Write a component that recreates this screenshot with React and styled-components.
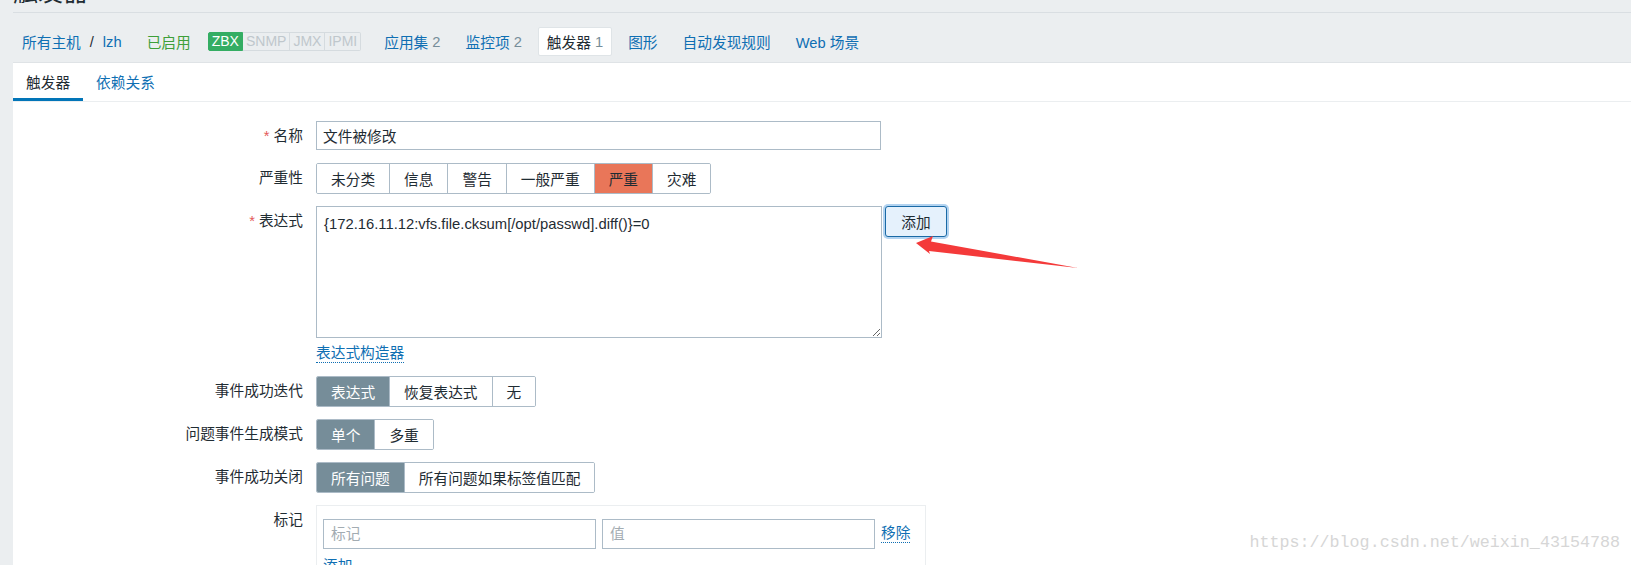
import React from 'react'
import styled, { createGlobalStyle } from 'styled-components'

const GlobalStyle = createGlobalStyle`
  body {
    margin: 0;
    background-color: #ebeef0;
    font-family: 'Liberation Sans', 'Noto Sans CJK SC', sans-serif;
    font-size: 14.7px;
    color: #1f2c33;
  }
`

const severities = ['未分类', '信息', '警告', '一般严重', '严重', '灾难']

const App = () => {
  return (
    <>
      <GlobalStyle />
      <Page>
        <TitleBar>
          <Title>触发器</Title>
        </TitleBar>

        <Nav>
          <NavItem>
            <span>所有主机</span>
            <Sep>/</Sep>
            <span>lzh</span>
          </NavItem>
          <NavItem><Status>已启用</Status></NavItem>
          <Badges>
            <Badge $on>ZBX</Badge>
            <Badge>SNMP</Badge>
            <Badge>JMX</Badge>
            <Badge>IPMI</Badge>
          </Badges>
          <NavItem>应用集 <Count>2</Count></NavItem>
          <NavItem>监控项 <Count>2</Count></NavItem>
          <NavItem $active>触发器 <Count>1</Count></NavItem>
          <NavItem>图形</NavItem>
          <NavItem>自动发现规则</NavItem>
          <NavItem>Web 场景</NavItem>
        </Nav>

        <Panel>
          <Tabs>
            <Tab $active>触发器</Tab>
            <Tab>依赖关系</Tab>
          </Tabs>

          <Form>
            <Label><Req>*</Req> 名称</Label>
            <TextInput defaultValue="文件被修改" />

            <Label>严重性</Label>
            <Segmented>
              {severities.map((s) => (
                <Segment key={s} $sel={s === '严重' ? 'high' : null}>{s}</Segment>
              ))}
            </Segmented>

            <Label><Req>*</Req> 表达式</Label>
            <div>
              <ExprRow>
                <ExprArea defaultValue="{172.16.11.12:vfs.file.cksum[/opt/passwd].diff()}=0" />
                <AddButton>添加</AddButton>
              </ExprRow>
              <BuilderLink>
                <DottedLink>表达式构造器</DottedLink>
              </BuilderLink>
            </div>

            <Label>事件成功迭代</Label>
            <Segmented>
              <Segment $sel="on">表达式</Segment>
              <Segment>恢复表达式</Segment>
              <Segment>无</Segment>
            </Segmented>

            <Label>问题事件生成模式</Label>
            <Segmented>
              <Segment $sel="on">单个</Segment>
              <Segment>多重</Segment>
            </Segmented>

            <Label>事件成功关闭</Label>
            <Segmented>
              <Segment $sel="on">所有问题</Segment>
              <Segment>所有问题如果标签值匹配</Segment>
            </Segmented>

            <Label>标记</Label>
            <TagBox>
              <TagRow>
                <TagInput placeholder="标记" />
                <TagInput placeholder="值" />
                <DottedLink>移除</DottedLink>
              </TagRow>
              <TagAdd><DottedLink>添加</DottedLink></TagAdd>
            </TagBox>
          </Form>
        </Panel>

        {/* red annotation arrow drawn over the screenshot */}
        <Arrow viewBox="0 0 180 45" width="180" height="45">
          <polygon points="11,15 28,8 26,13.5 173,40 24,23 25,26" fill="#f43a3a" />
        </Arrow>

        <Watermark>https://blog.csdn.net/weixin_43154788</Watermark>
      </Page>
    </>
  )
}

const Page = styled.div`
  position: relative;
  height: 565px;
  overflow: hidden;
  padding-left: 13px;
`

const TitleBar = styled.div`
  height: 12px;
  overflow: hidden;
  border-bottom: 1px solid #d9dee2;
`

const Title = styled.h1`
  margin: -23px 0 0 0;
  font-size: 25px;
  line-height: 30px;
  font-weight: normal;
  color: #1f2c33;
`

const Nav = styled.div`
  display: flex;
  align-items: center;
  gap: 7px;
  height: 49px;
  box-sizing: border-box;
  padding-top: 8px;
`

const NavItem = styled.div`
  display: flex;
  align-items: center;
  height: 29px;
  box-sizing: border-box;
  padding: 0 8px;
  white-space: pre;
  color: ${(p) => (p.$active ? '#1f2c33' : '#0f6fb3')};
  background-color: ${(p) => (p.$active ? '#ffffff' : 'transparent')};
  border: 1px solid ${(p) => (p.$active ? '#dfe4e7' : 'transparent')};
  border-radius: 2px;
`

const Sep = styled.span`
  margin: 0 9px 0 9px;
  color: #1f2c33;
`

const Count = styled.span`
  color: #768d99;
`

const Status = styled.span`
  color: #3e9f3a;
`

const Badges = styled.div`
  display: flex;
  height: 19px;
  margin: 0 7px 0 1px;
`

const Badge = styled.span`
  display: flex;
  align-items: center;
  padding: 0 3px;
  font-size: 14px;
  line-height: 17px;
  color: ${(p) => (p.$on ? '#ffffff' : '#bfc7cc')};
  background-color: ${(p) => (p.$on ? '#34ad63' : 'transparent')};
  border: 1px solid ${(p) => (p.$on ? '#34ad63' : '#d5dbdf')};
  border-left-width: ${(p) => (p.$on ? '1px' : '0')};
  border-radius: ${(p) => (p.$on ? '2px 0 0 2px' : '0')};
  &:last-child {
    border-radius: 0 2px 2px 0;
  }
`

const Panel = styled.div`
  background-color: #ffffff;
  border-top: 1px solid #dfe3e6;
  min-height: 600px;
`

const Tabs = styled.div`
  display: flex;
  height: 39px;
  box-sizing: border-box;
  border-bottom: 1px solid #ebeef0;
`

const Tab = styled.div`
  display: flex;
  align-items: center;
  padding: 2px 13px 0;
  box-sizing: border-box;
  color: ${(p) => (p.$active ? '#1f2c33' : '#0f6fb3')};
  border-bottom: 3px solid ${(p) => (p.$active ? '#0275b8' : 'transparent')};
`

const Form = styled.div`
  display: grid;
  grid-template-columns: 290px auto;
  column-gap: 13px;
  row-gap: 12px;
  justify-items: start;
  padding-top: 19px;
`

const Label = styled.div`
  justify-self: end;
  line-height: 30px;
  white-space: nowrap;
  color: #1f2c33;
`

const Req = styled.span`
  color: #e45959;
`

const TextInput = styled.input`
  width: 565px;
  height: 29px;
  box-sizing: border-box;
  padding: 0 6px;
  border: 1px solid #acbbc7;
  font-family: inherit;
  font-size: 14.7px;
  color: #1f2c33;
  outline: none;
`

const Segmented = styled.div`
  display: flex;
  height: 31px;
  box-sizing: border-box;
  border: 1px solid #acbbc7;
  border-radius: 2px;
  overflow: hidden;
`

const segmentBg = { high: '#e97659', on: '#768d99' }

const Segment = styled.div`
  display: flex;
  align-items: center;
  padding: 0 14px;
  white-space: nowrap;
  background-color: ${(p) => segmentBg[p.$sel] || '#ffffff'};
  color: ${(p) => (p.$sel === 'on' ? '#ffffff' : '#1f2c33')};
  & + & {
    border-left: 1px solid #acbbc7;
  }
`

const ExprRow = styled.div`
  display: flex;
  align-items: flex-start;
  gap: 3px;
`

const ExprArea = styled.textarea`
  display: block;
  width: 566px;
  height: 132px;
  box-sizing: border-box;
  padding: 8px 7px;
  border: 1px solid #acbbc7;
  font-family: 'Liberation Sans', sans-serif;
  font-size: 14.8px;
  line-height: 18px;
  color: #1f2c33;
  outline: none;
`

const AddButton = styled.button`
  width: 62px;
  height: 31px;
  background-color: #e5f1fc;
  border: 1px solid #1a6aa6;
  border-radius: 3px;
  box-shadow: 0 0 0 2px #b2d3f0;
  font-family: inherit;
  font-size: 14.7px;
  color: #1f2c33;
`

const DottedLink = styled.span`
  display: inline-block;
  color: #0f6fb3;
  line-height: 17px;
  border-bottom: 1px dotted #0f6fb3;
  white-space: nowrap;
  cursor: pointer;
`

const BuilderLink = styled.div`
  margin-top: 7px;
  height: 19px;
`

const TagBox = styled.div`
  width: 610px;
  box-sizing: border-box;
  padding: 13px 6px;
  border: 1px solid #ebeef0;
`

const TagRow = styled.div`
  display: flex;
  align-items: center;
  gap: 6px;
`

const TagInput = styled.input`
  width: 273px;
  height: 30px;
  box-sizing: border-box;
  padding: 0 7px;
  border: 1px solid #acbbc7;
  font-family: inherit;
  font-size: 14.7px;
  outline: none;
  &::placeholder {
    color: #a3acb2;
  }
`

const TagAdd = styled.div`
  margin-top: 9px;
`

const Arrow = styled.svg`
  position: absolute;
  left: 905px;
  top: 228px;
`

const Watermark = styled.div`
  position: absolute;
  right: 11px;
  top: 533px;
  font-family: 'Liberation Mono', monospace;
  font-size: 16.7px;
  line-height: 20px;
  color: #d6d6d6;
`

export default App
